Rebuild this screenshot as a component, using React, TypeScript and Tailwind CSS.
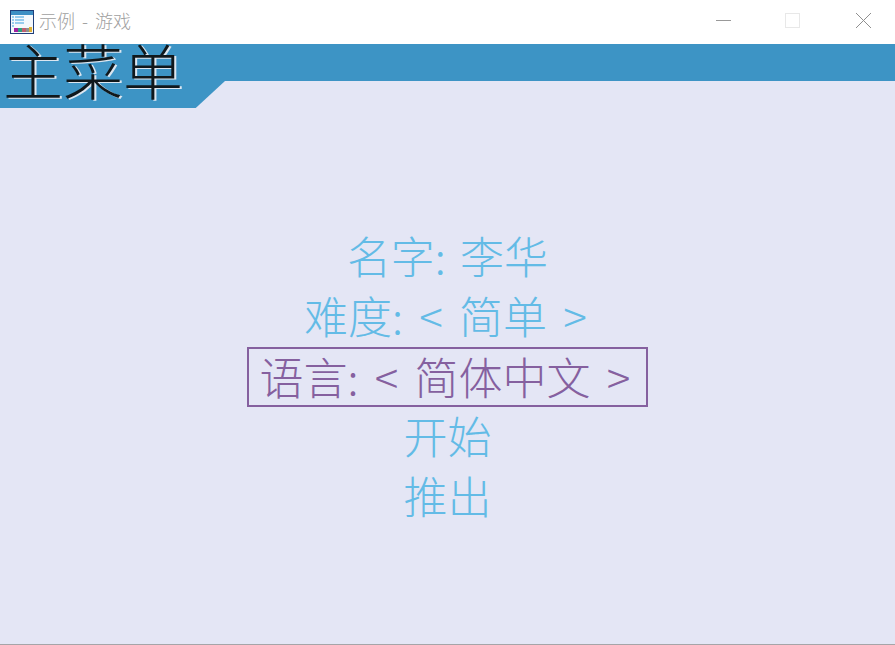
const cjk = "font-['Noto_Sans_CJK_SC','Noto_Sans_CJK_JP',sans-serif]";

function AppIcon() {
  return (
    <svg width="24" height="24" viewBox="0 0 24 24" className="shrink-0">
      <rect x="0.5" y="0.5" width="23" height="23" fill="#f4f8fc" stroke="#1f3f7a" />
      <rect x="1" y="1" width="22" height="4" fill="#3d8fc4" />
      <path d="M2 7h2M5 7h9M2 10h2M5 10h9M2 13h2M5 13h9M2 16h2" stroke="#3aa0e0" strokeWidth="1" />
      <rect x="4" y="18" width="4" height="4" fill="#a020a0" />
      <rect x="8" y="18" width="4" height="4" fill="#30a080" />
      <rect x="12" y="18" width="4" height="4" fill="#c06070" />
      <rect x="16" y="18" width="3" height="4" fill="#909090" />
      <rect x="19" y="17" width="3" height="5" fill="#e0b030" />
    </svg>
  );
}

function TitleBar() {
  return (
    <div className="h-11 bg-white flex items-center justify-between pl-[10px]">
      <div className="flex items-center gap-[5px]">
        <AppIcon />
        <span className={`${cjk} text-[18px] [word-spacing:3px] font-light text-[#9f9f9f] leading-none pb-[5px] mt-[1px]`}>示例 - 游戏</span>
      </div>
      <div className="flex items-center h-full pr-[24px] pb-[3px]">
        <div className="w-[15px] h-px bg-[#999999]" />
        <div className="w-[15px] h-[15px] border border-[#e8e8e8] ml-[54px]" />
        <div className="ml-[56px]">
          <svg width="15" height="15" viewBox="0 0 15 15" className="block">
            <path d="M0 0L15 15M15 0L0 15" stroke="#8f8f8f" strokeWidth="1" fill="none" />
          </svg>
        </div>
      </div>
    </div>
  );
}

function Banner() {
  return (
    <div className="relative h-16">
      <div className="h-[37px] bg-[#3d94c5]" />
      <div className="h-[27px] w-[225px] bg-[#3d94c5] [clip-path:polygon(0_0,100%_0,87%_100%,0_100%)]" />
      <div
        className={`${cjk} absolute left-[3px] top-[-7px] text-[60px] leading-[64px] font-light text-[#10181c] [text-shadow:2px_1px_0_#dbe6f0]`}
      >
        主菜单
      </div>
    </div>
  );
}

function MenuItem({ text, selected, tweak = "" }: { text: string; selected?: boolean; tweak?: string }) {
  return (
    <div
      className={
        selected
          ? `h-[60px] w-[401px] border-2 border-[#85609f] text-[#85609f] flex items-center justify-center whitespace-pre pb-[3px] ${tweak}`
          : `h-[60px] text-[#63bbe6] flex items-center justify-center whitespace-pre pb-[4px] ${tweak}`
      }
    >
      {text}
    </div>
  );
}

export default function App() {
  return (
    <div className="w-[895px] h-[645px] bg-[#e4e6f5] flex flex-col overflow-hidden">
      <TitleBar />
      <Banner />
      <main className={`${cjk} flex-1 flex flex-col items-center pt-[119px] text-[44px] font-light leading-none [word-spacing:6.5px]`}>
        <MenuItem text="名字: 李华" tweak="[word-spacing:4.5px]" />
        <MenuItem text="难度: < 简单 >" tweak="pr-[4px]" />
        <MenuItem text="语言: < 简体中文 >" selected tweak="pr-[5px]" />
        <MenuItem text="开始" />
        <MenuItem text="推出" />
      </main>
      <div className="h-px bg-[#a5a5a8]" />
    </div>
  );
}
